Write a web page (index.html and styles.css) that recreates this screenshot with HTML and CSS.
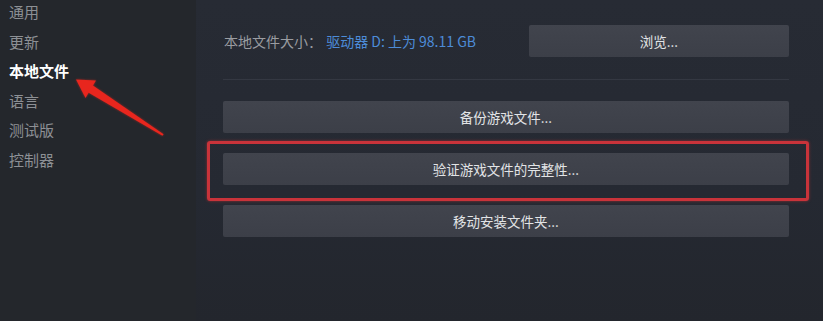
FILE: index.html
```html
<!DOCTYPE html>
<html lang="zh-CN">
<head>
<meta charset="utf-8">
<title>属性 - 本地文件</title>
<link rel="stylesheet" href="styles.css">
</head>
<body>
<div class="window">
  <nav class="sidebar">
    <div class="nav-item">通用</div>
    <div class="nav-item">更新</div>
    <div class="nav-item active">本地文件</div>
    <div class="nav-item">语言</div>
    <div class="nav-item">测试版</div>
    <div class="nav-item">控制器</div>
  </nav>
  <main class="panel">
    <div class="size-row">
      <div class="size-info">
        <span class="size-label">本地文件大小：</span>
        <span class="size-value">驱动器 D: 上为 98.11 GB</span>
      </div>
      <button class="btn btn-browse">浏览...</button>
    </div>
    <div class="separator"></div>
    <div class="actions">
      <button class="btn">备份游戏文件...</button>
      <button class="btn">验证游戏文件的完整性...</button>
      <button class="btn">移动安装文件夹...</button>
    </div>
  </main>
  <div class="highlight-box"></div>
  <svg class="arrow" width="823" height="321" viewBox="0 0 823 321" aria-hidden="true">
    <polygon points="76,79.5 96,80.5 85.5,98" fill="#e8261e"/>
    <polygon points="91.5,84.5 86.5,91.5 162.4,135.8 163.6,134.2" fill="#e8261e"/>
  </svg>
</div>
</body>
</html>
```
FILE: styles.css
```css
html, body {
  margin: 0;
  padding: 0;
  width: 823px;
  height: 321px;
  overflow: hidden;
  background: #24272c;
  font-family: "Noto Sans CJK SC", "Noto Sans", "Liberation Sans", sans-serif;
}

.window {
  position: relative;
  display: flex;
  width: 823px;
  height: 321px;
}

.sidebar {
  width: 196px;
  flex: none;
  background: #24272c;
  padding: 0 0 0 9px;
  box-sizing: border-box;
  margin-top: -3px;
}

.nav-item {
  font-size: 15px;
  line-height: 29.6px;
  color: #8d9095;
  white-space: nowrap;
}

.nav-item.active {
  color: #ffffff;
  font-weight: 700;
}

.panel {
  flex: 1;
  background: linear-gradient(180deg, #272b34 0%, #252932 60%, #23262d 100%);
  padding: 25px 34px 0 27px;
  box-sizing: border-box;
}

.size-row {
  display: flex;
  align-items: center;
  justify-content: space-between;
  height: 32px;
}

.size-info {
  font-size: 14px;
  white-space: nowrap;
  padding-left: 1px;
}

.size-label {
  color: #9a9ca1;
}

.size-value {
  color: #4d8cd8;
  margin-left: 1px;
}

.btn {
  display: block;
  width: 100%;
  height: 32px;
  border: none;
  border-radius: 2px;
  background: linear-gradient(180deg, #41444d 0%, #3c3f48 100%);
  color: #e2e4e6;
  font-family: "Noto Sans CJK SC", "Noto Sans", "Liberation Sans", sans-serif;
  font-size: 13.5px;
  line-height: 32px;
  padding: 0;
  text-align: center;
}

.btn-browse {
  width: 260px;
}

.separator {
  height: 1px;
  background: #343842;
  margin: 22px 0 21px;
}

.actions {
  display: flex;
  flex-direction: column;
  gap: 20px;
}

.highlight-box {
  position: absolute;
  left: 207px;
  top: 141px;
  width: 596px;
  height: 54px;
  border: 3px solid #c8333a;
  border-radius: 3px;
  box-shadow: 0 0 3px rgba(220, 50, 50, 0.6);
  pointer-events: none;
}

.arrow {
  position: absolute;
  left: 0;
  top: 0;
  pointer-events: none;
  filter: drop-shadow(0 0 1px rgba(230, 40, 30, 0.6));
}
```
